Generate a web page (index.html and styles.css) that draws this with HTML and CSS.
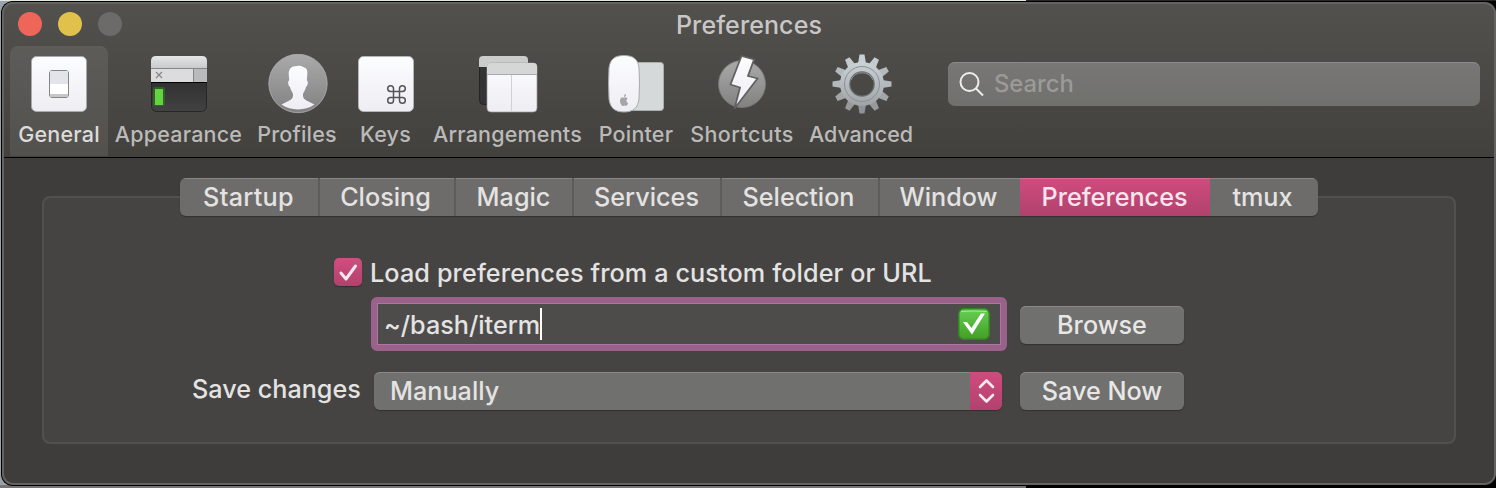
FILE: index.html
```html
<!DOCTYPE html>
<html lang="en">
<head>
<meta charset="utf-8">
<title>Preferences</title>
<link rel="stylesheet" href="styles.css">
</head>
<body>
<main class="window">
  <header class="toolbar">
    <div class="titlebar">
      <div class="lights"><i class="light close"></i><i class="light minimize"></i><i class="light zoom"></i></div>
      <h1 class="title">Preferences</h1>
    </div>
    <div class="tools">
      <nav class="items">
        <a class="item general active">
          <svg class="icon" viewBox="0 0 60 60"><defs><linearGradient id="white" x2="0" y2="1"><stop stop-color="#fcfdff"/><stop offset="1" stop-color="#eeedf3"/></linearGradient><linearGradient id="silver" x2="0" y2="1"><stop stop-color="#e5e6e7"/><stop offset="1" stop-color="#c9cacc"/></linearGradient><linearGradient id="disc" x2="0" y2="1"><stop stop-color="#aaa"/><stop offset="1" stop-color="#818181"/></linearGradient><linearGradient id="dark" x2="0" y2="1"><stop stop-color="#222"/><stop offset="1" stop-color="#424242"/></linearGradient></defs>
          <rect x="2.5" y="2.5" width="55" height="55" rx="5" fill="url(#white)" stroke="#aaaaad"/><rect x="20.5" y="16.500" width="19" height="27" rx="2.5" fill="#fff" stroke="#858587"/><path d="M21 17h18v13H21z" fill="#e1e4e9"/><path d="M21 40h18v2q0 1-1 1H22q-1 0-1-1z" fill="#c6c8c7"/></svg>
          <span class="label">General</span></a>
        <a class="item appearance">
          <svg class="icon" viewBox="0 0 60 60"><rect x="2.5" y="2.5" width="55" height="55" rx="5" fill="url(#dark)" stroke="#262626"/><path d="M2 14V7q0-5 5-5h46q5 0 5 5v7z" fill="url(#silver)"/><path d="M2 14h56v14H2z" fill="#dcdcde"/><path d="M45 15h13v13H45z" fill="#b9babc"/><path d="M2 14.5h56M44.5 14v14" stroke="#858688"/><path d="M2 28.5h56" stroke="#000"/><path d="M7 18l6 6M13 18l-6 6" stroke="#858585" stroke-width="1.2"/><rect x="4" y="33" width="12" height="19" rx="2" fill="#347423" opacity=".65"/><path d="M6 35h8v16H6z" fill="#63d43f"/></svg>
          <span class="label">Appearance</span></a>
        <a class="item profiles">
          <svg class="icon nudge" viewBox="0 0 60 60"><circle cx="30" cy="29.5" r="29.2" fill="url(#disc)" stroke="#b0b0b0" stroke-width=".8"/><path d="M29 12C33 11 35 12.500 36 13.500C39 14 39.500 17 39.300 20L38.800 26.500C40.500 27 40 31.500 38 33C37.500 36 35.500 38 35 40C34.500 46 38 46 46.500 50.500C37 57 23 57 13.500 50.500C22 46 25.500 46 25 40C24.500 38 22.500 36 22 33C20 31.500 19.500 27 21.200 26.500L20.700 20C20.700 15 23 12 29 12Z" fill="url(#white)"/></svg>
          <span class="label">Profiles</span></a>
        <a class="item keys">
          <svg class="icon" viewBox="0 0 60 60"><rect x="2.5" y="2.5" width="55" height="55" rx="5" fill="url(#white)" stroke="#b5b5b7"/><path d="M37.500 37.500h6v6h-6zM37.500 37.500h-3a2.900 2.900 0 1 1 3-3zM43.500 37.500v-3a2.900 2.900 0 1 1 3 3zM43.500 43.500h3a2.900 2.900 0 1 1-3 3zM37.500 43.500v3a2.900 2.900 0 1 1-3-3z" fill="none" stroke="#555" stroke-width="1.5"/></svg>
          <span class="label">Keys</span></a>
        <a class="item arrangements">
          <svg class="icon" viewBox="0 0 60 60"><rect x="1.5" y="2.5" width="48" height="48" rx="4" fill="#343434" stroke="#252525"/><path d="M1 13V6q0-4 4-4h41q4 0 4 4v7z" fill="#cbcccc"/><rect x="9" y="9" width="50" height="49" rx="4" fill="url(#white)" stroke="#9c9c9e" stroke-width=".7"/><path d="M9 20v-7q0-4 4-4h42q4 0 4 4v7z" fill="#d5d6d6"/><path d="M9 20.5h50" stroke="#aaa"/><path d="M33.5 21v37" stroke="#d0d1d4"/></svg>
          <span class="label">Arrangements</span></a>
        <a class="item pointer">
          <svg class="icon" viewBox="0 0 60 60"><rect x="19" y="8.5" width="38.5" height="48" rx="3" fill="#d5d9d9" stroke="#abaeae"/><path d="M18 1.500C9 1.500 4 5 3 14q-1 15 0 31c1 9 6 13 15 13s14-4 15-13q1-16 0-31C32 5 27 1.500 18 1.500z" fill="url(#white)" stroke="#aaa"/><path d="M18 44q-3-2-4 2c0 4 2 6 3 6l2-.5 1 .5q2-1 2-3-3-2-.5-4.5-2-2-3.500-.5zm0-1q0-3 2-3 0 3-2 3z" fill="#a5a5a7"/></svg>
          <span class="label">Pointer</span></a>
        <a class="item shortcuts">
          <svg class="icon" viewBox="0 0 60 60"><circle cx="30" cy="30" r="23.5" fill="url(#disc)" stroke="#777"/><path d="M29.500 2l12.500 3.500-6 16.500 9.500 2.500L22.500 54.500l5.500-21-9.500-3z" fill="url(#white)" stroke="#626262" stroke-width="1.8"/></svg>
          <span class="label">Shortcuts</span></a>
        <a class="item advanced">
          <svg class="icon nudge" viewBox="0 0 60 60"><defs><linearGradient id="gear" gradientUnits="userSpaceOnUse" x1="0" y1="8" x2="0" y2="52"><stop stop-color="#cbd3d6"/><stop offset="1" stop-color="#a0a3a5"/></linearGradient><path id="tooth" d="M25.500 13l2-12.500h5l2 12.500z"/></defs><g fill="#b3babd"><use href="#tooth" fill="#c8d0d3"/><use href="#tooth" transform="rotate(30 30 30)" fill="#c3cbce"/><use href="#tooth" transform="rotate(60 30 30)"/><use href="#tooth" transform="rotate(90 30 30)"/><use href="#tooth" transform="rotate(120 30 30)" fill="#a2a6a8"/><use href="#tooth" transform="rotate(150 30 30)" fill="#979a9c"/><use href="#tooth" transform="rotate(180 30 30)" fill="#909395"/><use href="#tooth" transform="rotate(210 30 30)" fill="#979a9c"/><use href="#tooth" transform="rotate(240 30 30)" fill="#a2a6a8"/><use href="#tooth" transform="rotate(270 30 30)"/><use href="#tooth" transform="rotate(300 30 30)"/><use href="#tooth" transform="rotate(330 30 30)" fill="#c3cbce"/></g><circle cx="30" cy="30" r="17" fill="none" stroke="url(#gear)" stroke-width="10"/><circle cx="30" cy="30" r="17.500" fill="none" stroke="#8b9194"/><circle cx="30" cy="30" r="12.200" fill="none" stroke="#696d6f" stroke-width="1.200"/><path d="M19 26a12 12 0 0 1 22 0" fill="none" stroke="#8b9194"/></svg>
          <span class="label">Advanced</span></a>
      </nav>
      <div class="search"><svg viewBox="0 0 28 28"><circle cx="11.500" cy="12" r="9" /><path d="M18 18.500l7 7"/></svg><span class="t-search">Search</span></div>
    </div>
  </header>
  <section class="content">
    <div class="group">
      <nav class="tabs">
        <a class="tab w-startup"><span>Startup</span></a><a class="tab w-closing"><span>Closing</span></a><a class="tab w-magic"><span>Magic</span></a><a class="tab w-services"><span>Services</span></a><a class="tab w-selection"><span>Selection</span></a><a class="tab w-window"><span>Window</span></a><a class="tab w-preferences selected"><span>Preferences</span></a><a class="tab w-tmux"><span>tmux</span></a>
      </nav>
      <form class="form">
        <label class="load"><svg class="check" viewBox="0 0 28 28"><path d="M7 15l5 6L21.500 8"/></svg><span class="t-load">Load preferences from a custom folder or URL</span></label>
        <div class="row path-row">
          <div class="field"><span class="t-path">~/bash/iterm</span><i class="caret"></i>
            <svg class="valid" viewBox="0 0 32 32"><defs><linearGradient id="green" x2="0" y2="1"><stop stop-color="#68ce55"/><stop offset="1" stop-color="#419f24"/></linearGradient></defs><rect x=".75" y=".75" width="30.500" height="30.500" rx="5" fill="url(#green)" stroke="#338522" stroke-width="1.500"/><path d="M3 3.500q13-1 26 0" stroke="#a5e795" fill="none"/><path d="M5 14h4l4.500 6L23 5.500h4L14 26.500z" fill="#fff"/></svg>
          </div>
          <button type="button" class="button"><span class="t-browse">Browse</span></button>
        </div>
        <div class="row save-row">
          <span class="save-label"><span class="t-save">Save changes</span></span>
          <div class="select"><span class="t-manual">Manually</span><svg class="stepper" viewBox="0 0 32 38"><path d="M10 15l6.500-6.500L23 15M10 23l6.500 6.500L23 23"/></svg></div>
          <button type="button" class="button"><span class="t-now">Save Now</span></button>
        </div>
      </form>
    </div>
  </section>
</main>
</body>
</html>
```

FILE: styles.css
```css
* { box-sizing: border-box; }
body {
  margin: 0; width: 1496px; height: 488px; overflow: hidden;
  padding: 1px 0 2px 1px;
  background: linear-gradient(90deg, #e3e8df 1026px, #292a26 1026px) 0 0 / 100% 1px no-repeat,
    linear-gradient(90deg, #777478 1026px, #000 1026px) 0 100% / 100% 3px no-repeat,
    linear-gradient(90deg, #9aa3ab 20px, #000 20px);
  font: 450 25.200px/30px Inter, "Liberation Sans", sans-serif;
  color: #e4e3e2; white-space: nowrap;
}
.window {
  height: 485px; border: 1px solid #000; border-right: 0; border-radius: 12px;
  background: #3e3d3b; overflow: hidden; position: relative;
}
.window::after {
  content: ""; position: absolute; inset: 0; border: 2px solid #64635f;
  border-radius: 11px; pointer-events: none;
}
.toolbar {
  height: 156px; padding-left: 8px; border-bottom: 1px solid #000;
  background: linear-gradient(#52514e, #42413e);
}
.titlebar { height: 44px; display: grid; grid-template-columns: 200px 1fr 216px; align-items: center; padding-left: 8px; }
.lights { display: flex; gap: 16px; }
.light { width: 24px; height: 24px; border-radius: 50%; }
.close { background: #ee6659; }
.minimize { background: #e1c04c; }
.zoom { background: #6c6b69; }
.title { justify-self: center; margin: 2px 0 0; font-size: 25px; font-weight: 450; color: #c8c7c6; letter-spacing: .1px; }
.tools { display: flex; justify-content: space-between; padding-right: 16px; }
.items { display: flex; }
.item { height: 110px; padding-top: 8px; display: flex; flex-direction: column; align-items: center; color: #bbbab8; font-size: 21.500px; letter-spacing: .2px; border-radius: 8px 8px 0 0; }
.item.active { background: linear-gradient(#5d5c59, #52514e); color: #dddcda; }
.icon { width: 60px; height: 60px; flex: none; }
.nudge { margin-left: 1px; }
.label { margin-top: 5px; }
.general { width: 98px; } .appearance { width: 141px; } .profiles { width: 96px; } .keys { width: 81px; }
.arrangements { width: 163px; } .pointer { width: 94px; } .shortcuts { width: 118px; letter-spacing: .45px; } .advanced { width: 120px; letter-spacing: 0; }
.search {
  width: 532px; height: 44px; margin-top: 16px; padding-left: 10px;
  display: flex; align-items: center; gap: 8px; border-radius: 7px;
  background: linear-gradient(#787775, #70706d); box-shadow: inset 0 1px #8b8a88;
  color: #9b9a98; font-size: 23.800px;
}
.search svg { width: 28px; height: 28px; fill: none; stroke: #eee; stroke-width: 2; }
.content { padding: 38px 40px 0 40px; }
.group { height: 248px; border: 2px solid #52514e; border-radius: 8px; background: #454442; }
.tabs { width: 1138px; height: 38px; margin: -20px 0 0 136px; display: flex; position: relative; border-radius: 6px; overflow: hidden; background: #6d6c6a; box-shadow: 0 1px 1px #32312f; }
.tab { height: 38px; padding-right: 1px; display: flex; align-items: center; justify-content: center; border-right: 2px solid #5d5c5a; box-shadow: inset 0 1px #888785; }
.tab.selected { background: linear-gradient(#d04b7e, #b1426d); box-shadow: inset 0 1px #d96b96; color: #f7e5ed; }
.w-startup { width: 140px; letter-spacing: .3px; } .w-closing { width: 136px; padding-right: 3px; } .w-magic { width: 118px; } .w-services { width: 148px; }
.w-selection { width: 158px; padding-right: 3px; } .w-window { width: 140px; border: 0; padding-right: 3px; } .w-preferences { width: 190px; border: 0; } .w-tmux { width: 108px; border: 0; padding-right: 3px; }
.form { padding-left: 148px; }
.load { display: flex; height: 28px; margin: 42px 0 0 142px; gap: 8px; align-items: center; }
.t-load { margin-top: 2px; letter-spacing: .12px; }
.t-path { margin-top: 1px; }
.check { width: 28px; height: 28px; border-radius: 5px; background: linear-gradient(#d14e80, #b2416c); box-shadow: 0 1px 1px #302f2e; fill: none; stroke: #fbe9f0; stroke-width: 3; stroke-linecap: round; stroke-linejoin: round; }
.row { display: flex; align-items: center; }
.path-row { margin: 11px 0 0 179px; height: 54px; }
.field { width: 636px; height: 54px; border: 6px solid #9a618a; border-radius: 6px; background: #4d4c4a; box-shadow: inset 0 0 0 1px #aa789d; display: flex; align-items: center; padding: 0 11px 0 7px; margin-right: 13px; }
.caret { width: 2px; height: 32px; background: #fff; }
.valid { width: 32px; height: 32px; margin-left: auto; }
.button { width: 164px; height: 38px; padding: 0; border: 0; border-radius: 6px; background: #70706e; box-shadow: inset 0 1px #8a8987, 0 1px 1px #32312f; font: inherit; color: #e8e7e6; }
.path-row .button { margin-top: 2px; }
.save-row { margin-top: 21px; height: 38px; }
.save-label { width: 182px; margin-top: -4px; }
.select { width: 628px; height: 38px; margin-right: 18px; border-radius: 6px; overflow: hidden; display: flex; align-items: center; justify-content: space-between; padding-left: 16px; background: #70706e; box-shadow: inset 0 1px #8a8987, 0 1px 1px #32312f; }
.stepper { width: 32px; height: 38px; background: linear-gradient(#d04b7e, #b1426d); fill: none; stroke: #fbe9f0; stroke-width: 2.600; stroke-linecap: round; stroke-linejoin: round; }
```
